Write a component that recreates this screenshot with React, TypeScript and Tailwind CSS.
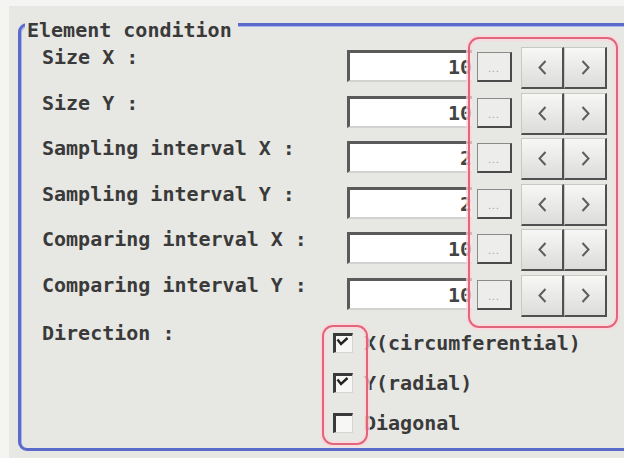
import React from "react";

const rows = [
  { label: "Size X :", value: "10", h: "h-[46px]" },
  { label: "Size Y :", value: "10", h: "h-[45px]" },
  { label: "Sampling interval X :", value: "2", h: "h-[46px]" },
  { label: "Sampling interval Y :", value: "2", h: "h-[45px]" },
  { label: "Comparing interval X :", value: "10", h: "h-[46px]" },
  { label: "Comparing interval Y :", value: "10", h: "h-[46px]" },
];

const checks = [
  { label: "X(circumferential)", checked: true },
  { label: "Y(radial)", checked: true },
  { label: "Diagonal", checked: false },
];

function Chevron({ dir }: { dir: "left" | "right" }) {
  return (
    <svg width="9" height="15" viewBox="0 0 9 15">
      <polyline
        points={dir === "left" ? "7.5,1 1.5,7.5 7.5,14" : "1.5,1 7.5,7.5 1.5,14"}
        fill="none"
        stroke="#5e5e5e"
        strokeWidth="2"
      />
    </svg>
  );
}

function ArrowButton({ dir }: { dir: "left" | "right" }) {
  return (
    <div className="w-[43px] h-[42px] flex items-center justify-center bg-gradient-to-b from-[#f7f7f6] to-[#dcdcda] border-t border-l border-t-[#c8c8c6] border-l-[#c8c8c6] border-r-2 border-b-2 border-r-[#505050] border-b-[#505050]">
      <Chevron dir={dir} />
    </div>
  );
}

function Checkbox({ checked }: { checked: boolean }) {
  return (
    <div className="w-[20px] h-[20px] shrink-0 bg-[#f7f7f5] border-t-[3px] border-l-[3px] border-t-[#3a3a3a] border-l-[#3a3a3a] border-r border-b border-r-[#d4d4d2] border-b-[#d4d4d2] flex items-start justify-start">
      {checked && (
        <svg width="14" height="13" viewBox="0 0 14 13">
          <polyline points="1.5,3.5 5,8 11.5,2" fill="none" stroke="#222" strokeWidth="2.4" />
        </svg>
      )}
    </div>
  );
}

export default function App() {
  return (
    <div className="w-[624px] h-[458px] bg-[#f4f4f2] relative overflow-hidden pt-[6px] pl-[9px] font-['DejaVu_Sans_Mono',monospace] text-[20px] text-[#3a3a3a] font-bold">
      <div className="h-full w-[700px] bg-[#e7e7e3] pt-[17px] pl-[9px]">
        <div className="relative w-[660px] h-[428px] border-[3px] border-[#5a6bcc] rounded-[9px] shadow-[inset_1px_1px_0_#a9b4ee] pt-[19px] pl-[21px]">
          <div className="absolute left-[4px] top-[-8px] bg-[#e7e7e3] pl-[2px] pr-[6px] leading-[24px] whitespace-pre">
            Element condition
          </div>

          {rows.map((r) => (
            <div key={r.label} className={`flex items-start ${r.h}`}>
              <div className="w-[305px] shrink-0 leading-[24px] whitespace-pre">{r.label}</div>
              <div className="mt-[5px] w-[125px] shrink-0 h-[32px] bg-white border-t-[3px] border-l-[3px] border-t-[#5a5a5a] border-l-[#5a5a5a] border-b-2 border-b-[#d2d2d0] flex items-center justify-end">
                <span className="leading-[24px] text-[#444]">{r.value}</span>
              </div>
              <div className="ml-[5px] mt-[7px] w-[35px] shrink-0 h-[30px] bg-[#ededeb] border border-[#8a8a8a] border-r-2 border-b-2 border-r-[#4a4a4a] border-b-[#4a4a4a] flex items-end justify-center pb-[6px]">
                <span className="text-[10px] leading-[10px] text-[#9a9a9a] tracking-[1px] font-normal font-['Liberation_Sans',sans-serif]">...</span>
              </div>
              <div className="ml-[9px] mt-[2px] flex shrink-0">
                <ArrowButton dir="left" />
                <ArrowButton dir="right" />
              </div>
            </div>
          ))}

          <div className="flex items-start">
            <div className="w-[291px] shrink-0 mt-[2px] leading-[24px] whitespace-pre">Direction :</div>
            <div className="mt-[4px] flex flex-col">
              {checks.map((c) => (
                <div key={c.label} className="h-[40px] flex items-center">
                  <Checkbox checked={c.checked} />
                  <span className="ml-[11px] leading-[24px] whitespace-pre">{c.label}</span>
                </div>
              ))}
            </div>
          </div>
        </div>
      </div>

      <div className="absolute left-[468px] top-[37px] w-[150px] h-[291px] border-2 border-[#e0677a] rounded-[11px] shadow-[0_0_0_2px_rgba(255,214,220,0.75),inset_0_0_0_2px_rgba(255,214,220,0.75)]" />
      <div className="absolute left-[322px] top-[325px] w-[46px] h-[120px] border-2 border-[#e0677a] rounded-[11px] shadow-[0_0_0_2px_rgba(255,214,220,0.75),inset_0_0_0_2px_rgba(255,214,220,0.75)]" />
    </div>
  );
}
